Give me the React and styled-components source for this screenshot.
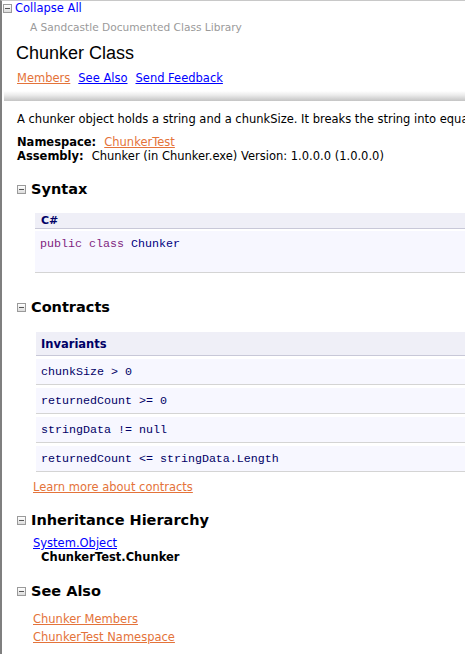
import React from 'react';
import styled, { createGlobalStyle } from 'styled-components';

const GlobalStyle = createGlobalStyle`
  html, body {
    margin: 0;
    padding: 0;
    background: #ffffff;
  }
  body {
    font-family: "DejaVu Sans", Verdana, sans-serif;
    font-size: 11.5px;
    color: #000000;
    overflow: hidden;
  }
`;

const Page = styled.div`
  min-height: 654px;
  border-left: 2px solid #7f7f7f;
  border-top: 1px solid #c8c8c8;
  box-sizing: border-box;
  width: 100%;
  overflow: hidden;
`;

const Header = styled.div`
  background: #ffffff;
`;

const CollapseRow = styled.div`
  display: flex;
  align-items: center;
  gap: 3px;
  padding-left: 1px;
  height: 15px;
  line-height: 15px;
`;

const ToggleBox = styled.span`
  position: relative;
  display: inline-block;
  width: 7px;
  height: 7px;
  border: 1px solid #9a9a9a;
  background: linear-gradient(#ffffff, #dcdcdc);
  flex-shrink: 0;

  &::after {
    content: '';
    position: absolute;
    left: 1px;
    right: 1px;
    top: 3px;
    height: 1px;
    background: #555555;
  }
`;

const BlueLink = styled.a`
  color: #0000ff;
  text-decoration: ${(p) => (p.underline ? 'underline' : 'none')};
  cursor: pointer;
`;

const OrangeLink = styled.a`
  color: #e4733a;
  text-decoration: underline;
  cursor: pointer;
`;

const LibraryName = styled.div`
  padding: 4px 0 0 28px;
  line-height: 14px;
  font-size: 10.6px;
  color: #9a9a9a;
`;

const Title = styled.h1`
  margin: 0;
  padding: 7px 0 0 14px;
  font-family: "Liberation Sans", Arial, sans-serif;
  font-weight: normal;
  font-size: 18px;
  line-height: 24px;
`;

const NavLinks = styled.div`
  display: flex;
  gap: 8px;
  padding: 6px 0 0 15px;
  line-height: 14px;
`;

const GradientBar = styled.div`
  height: 10px;
  margin-top: 6px;
  margin-left: 2px;
  background: linear-gradient(#ffffff, #ececec 40%, #c4c4c4);
`;

const Body = styled.div`
  padding: 11px 0 0 15px;
`;

const Paragraph = styled.p`
  margin: 0 0 9px 0;
  line-height: 14px;
  white-space: nowrap;
`;

const InfoLine = styled.div`
  line-height: 14px;
  white-space: nowrap;

  b {
    font-weight: bold;
    margin-right: 8px;
  }
`;

const SectionHeading = styled.div`
  display: flex;
  align-items: center;
  gap: 5px;
  font-weight: bold;
  font-size: 14.5px;
  line-height: 18px;
  margin: ${(p) => p.top}px 0 0 0;
`;

const SectionBody = styled.div`
  padding-left: ${(p) => p.indent || 16}px;
  margin-top: ${(p) => p.top || 0}px;
`;

const CodeHeader = styled.div`
  background: #efeff7;
  border-bottom: 1px solid #c8c8d8;
  height: 15px;
  line-height: 16px;
  padding-left: 6px;
  font-size: 11px;
  font-weight: bold;
  color: #000066;
`;

const CodeArea = styled.div`
  margin-top: 2px;
  background: #f7f7ff;
  border-bottom: 1px solid #d4d4d4;
  height: 42px;
  padding: 6px 0 0 5px;
  box-sizing: border-box;
  line-height: 14px;
  font-family: "Liberation Mono", "Courier New", monospace;
  font-size: 11.67px;
`;

const Keyword = styled.span`
  color: #7f1f80;
`;

const TypeName = styled.span`
  color: #000080;
`;

const TableHead = styled.div`
  background: #efeff7;
  border-bottom: 1px solid #c8c8d8;
  height: 23px;
  line-height: 24px;
  padding-left: 5px;
  font-weight: bold;
  color: #000066;
`;

const TableRow = styled.div`
  margin-top: 3px;
  background: #f7f7ff;
  border-bottom: 1px solid #d4d4d4;
  height: 25px;
  line-height: 26px;
  padding-left: 5px;
  font-family: "Liberation Mono", "Courier New", monospace;
  font-size: 11.67px;
  color: #000066;
`;

const LinkLine = styled.div`
  line-height: ${(p) => p.lh || 14}px;
  margin-top: ${(p) => p.top || 0}px;
`;

const HierarchyChild = styled.div`
  padding-left: 8px;
  font-weight: bold;
  line-height: 14px;
`;

const invariants = [
  'chunkSize > 0',
  'returnedCount >= 0',
  'stringData != null',
  'returnedCount <= stringData.Length',
];

export default function App() {
  return (
    <>
      <GlobalStyle />
      <Page>
        <Header>
          <CollapseRow>
            <ToggleBox />
            <BlueLink>Collapse All</BlueLink>
          </CollapseRow>
          <LibraryName>A Sandcastle Documented Class Library</LibraryName>
          <Title>Chunker Class</Title>
          <NavLinks>
            <OrangeLink>Members</OrangeLink>
            <BlueLink underline>See Also</BlueLink>
            <BlueLink underline>Send Feedback</BlueLink>
          </NavLinks>
          <GradientBar />
        </Header>

        <Body>
          <Paragraph>
            A chunker object holds a string and a chunkSize. It breaks the string into equal chunks.
          </Paragraph>
          <InfoLine>
            <b>Namespace:</b>
            <OrangeLink>ChunkerTest</OrangeLink>
          </InfoLine>
          <InfoLine>
            <b>Assembly:</b>Chunker (in Chunker.exe) Version: 1.0.0.0 (1.0.0.0)
          </InfoLine>

          <SectionHeading top={17}>
            <ToggleBox />
            Syntax
          </SectionHeading>
          <SectionBody indent={18} top={15}>
            <CodeHeader>C#</CodeHeader>
            <CodeArea>
              <Keyword>public</Keyword> <Keyword>class</Keyword> <TypeName>Chunker</TypeName>
            </CodeArea>
          </SectionBody>

          <SectionHeading top={25}>
            <ToggleBox />
            Contracts
          </SectionHeading>
          <SectionBody indent={19} top={16}>
            <TableHead>Invariants</TableHead>
            {invariants.map((line) => (
              <TableRow key={line}>{line}</TableRow>
            ))}
          </SectionBody>
          <SectionBody>
            <LinkLine top={8}>
              <OrangeLink>Learn more about contracts</OrangeLink>
            </LinkLine>
          </SectionBody>

          <SectionHeading top={17}>
            <ToggleBox />
            Inheritance Hierarchy
          </SectionHeading>
          <SectionBody>
            <LinkLine top={7}>
              <BlueLink underline>System.Object</BlueLink>
            </LinkLine>
            <HierarchyChild>ChunkerTest.Chunker</HierarchyChild>
          </SectionBody>

          <SectionHeading top={18}>
            <ToggleBox />
            See Also
          </SectionHeading>
          <SectionBody>
            <LinkLine top={10} lh={18}>
              <OrangeLink>Chunker Members</OrangeLink>
            </LinkLine>
            <LinkLine lh={18}>
              <OrangeLink>ChunkerTest Namespace</OrangeLink>
            </LinkLine>
          </SectionBody>
        </Body>
      </Page>
    </>
  );
}
